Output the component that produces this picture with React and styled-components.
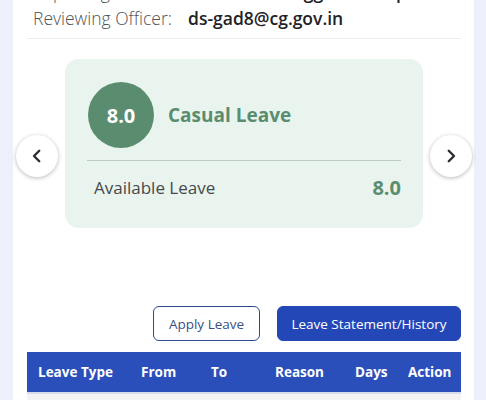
import React from "react";
import styled, { createGlobalStyle } from "styled-components";

const Global = createGlobalStyle`
  html, body { margin: 0; padding: 0; background: #edf0fa; }
  body { font-family: "Open Sans", "Noto Sans", sans-serif; }
  * { box-sizing: border-box; }
`;

const Page = styled.div`
  width: 486px;
  height: 400px;
  overflow: hidden;
  padding: 0 12px 0 13px;
  background: #edf0fa;
`;

const Sheet = styled.div`
  background: #ffffff;
  height: 100%;
  display: flex;
  flex-direction: column;
`;

const Info = styled.div`
  margin: -21px 13px 0 14px;
  padding: 0 6px 7px;
  border-bottom: 1px solid #eceef0;
  display: flex;
  flex-direction: column;
`;

const InfoRow = styled.div`
  display: flex;
  align-items: baseline;
  height: 26px;
  line-height: 26px;
  white-space: nowrap;
`;

const Label = styled.span`
  width: 155px;
  flex: none;
  font-size: 17.5px;
  color: #4f5459;
  font-weight: 300;
`;

const Value = styled.span`
  font-size: 17.5px;
  font-weight: 600;
  color: #1f2226;
`;

const Carousel = styled.div`
  display: flex;
  align-items: flex-start;
  gap: 7px;
  padding: 20px 2px 0 3px;
`;

const NavButton = styled.button`
  flex: none;
  width: 42px;
  height: 42px;
  margin-top: 76px;
  border-radius: 50%;
  border: none;
  background: #ffffff;
  box-shadow: 0 1px 4px rgba(0, 0, 0, 0.28);
  display: flex;
  align-items: center;
  justify-content: center;
  padding: 0;
  color: #2b2f33;
`;

const LeaveCard = styled.div`
  flex: 1;
  height: 169px;
  background: #eaf4ee;
  border-radius: 14px;
  padding: 23px 22px 0 22px;
  display: flex;
  flex-direction: column;
`;

const CardHead = styled.div`
  display: flex;
  align-items: center;
  gap: 14px;
  padding-left: 1px;
  padding-bottom: 12px;
  border-bottom: 1px solid #b9cbbf;
`;

const Circle = styled.div`
  width: 66px;
  height: 66px;
  border-radius: 50%;
  background: #5a8d6f;
  color: #ffffff;
  font-size: 20px;
  font-weight: 700;
  display: flex;
  align-items: center;
  justify-content: center;
`;

const Title = styled.div`
  font-size: 19px;
  font-weight: 700;
  color: #5a8d6f;
`;

const AvailRow = styled.div`
  display: flex;
  justify-content: space-between;
  align-items: center;
  padding: 13px 0 0 7px;
  height: 40px;
`;

const AvailLabel = styled.span`
  font-size: 17px;
  color: #45494d;
`;

const AvailValue = styled.span`
  font-size: 20px;
  font-weight: 700;
  color: #5a8d6f;
`;

const Actions = styled.div`
  display: flex;
  justify-content: flex-end;
  gap: 17px;
  margin: 78px 13px 0 0;
`;

const ActionButton = styled.button`
  height: 35px;
  width: ${(p) => p.$w}px;
  border-radius: 6px;
  font-family: "Open Sans", "Noto Sans", sans-serif;
  font-size: 13.5px;
  padding: 0;
  border: 1.5px solid ${(p) => (p.$primary ? "#2447b8" : "#2d4a8a")};
  background: ${(p) => (p.$primary ? "#2447b8" : "#ffffff")};
  color: ${(p) => (p.$primary ? "#ffffff" : "#3a4f88")};
`;

const Table = styled.div`
  margin: 11px 13px 0 14px;
`;

const HeadRow = styled.div`
  display: grid;
  grid-template-columns: 103px 70px 64px 80px 53px 1fr;
  align-items: center;
  height: 42px;
  padding-left: 11px;
  background: #2a4fbb;
  border-bottom: 2px solid #d7dcea;
`;

const HeadCell = styled.div`
  color: #ffffff;
  font-size: 13.5px;
  font-weight: 700;
  white-space: nowrap;
`;

const BodyRow = styled.div`
  height: 20px;
  background: #f3f3f5;
`;

const Chevron = ({ dir }) => (
  <svg width="18" height="18" viewBox="0 0 24 24" fill="none" stroke="currentColor" strokeWidth="3.2" strokeLinecap="round" strokeLinejoin="round">
    {dir === "left" ? <path d="M15 5l-7 7 7 7" /> : <path d="M9 5l7 7-7 7" />}
  </svg>
);

export default function App() {
  const cols = ["Leave Type", "From", "To", "Reason", "Days", "Action"];
  return (
    <>
      <Global />
      <Page>
        <Sheet>
          <Info>
            <InfoRow>
              <Label>Reporting Officer:</Label>
              <Value>sunil.kumar.aggarwal.dept</Value>
            </InfoRow>
            <InfoRow>
              <Label>Reviewing Officer:</Label>
              <Value>ds-gad8@cg.gov.in</Value>
            </InfoRow>
          </Info>
          <Carousel>
            <NavButton aria-label="previous"><Chevron dir="left" /></NavButton>
            <LeaveCard>
              <CardHead>
                <Circle>8.0</Circle>
                <Title>Casual Leave</Title>
              </CardHead>
              <AvailRow>
                <AvailLabel>Available Leave</AvailLabel>
                <AvailValue>8.0</AvailValue>
              </AvailRow>
            </LeaveCard>
            <NavButton aria-label="next"><Chevron dir="right" /></NavButton>
          </Carousel>
          <Actions>
            <ActionButton $w={107}>Apply Leave</ActionButton>
            <ActionButton $w={184} $primary>Leave Statement/History</ActionButton>
          </Actions>
          <Table>
            <HeadRow>
              {cols.map((c) => (
                <HeadCell key={c}>{c}</HeadCell>
              ))}
            </HeadRow>
            <BodyRow />
          </Table>
        </Sheet>
      </Page>
    </>
  );
}
